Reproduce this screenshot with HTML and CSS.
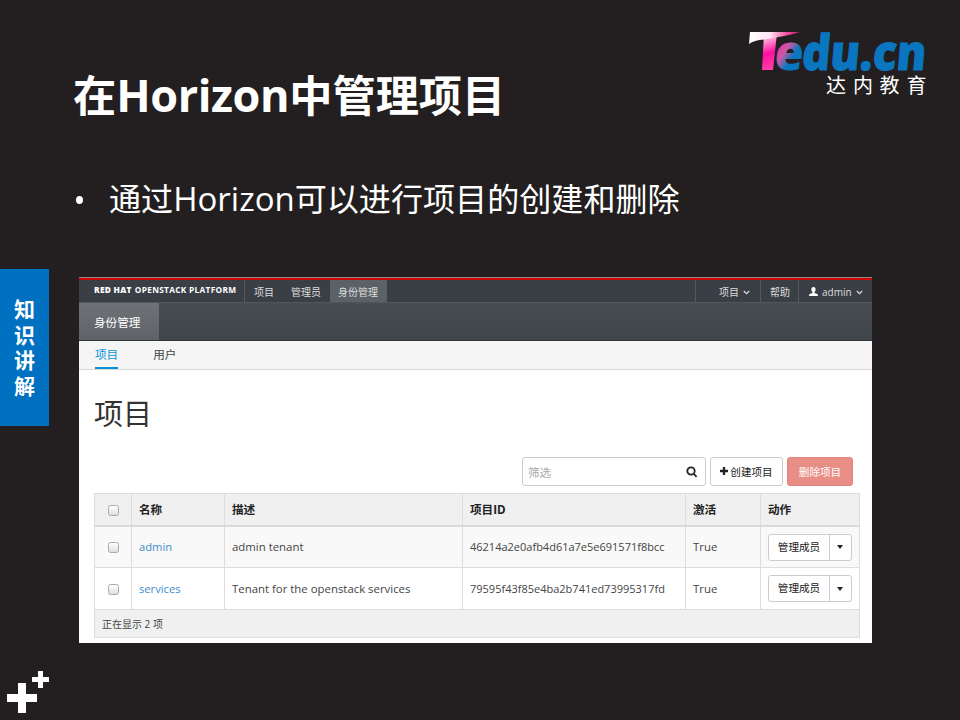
FILE: index.html
```html
<!DOCTYPE html>
<html lang="zh-CN">
<head>
<meta charset="utf-8">
<title>在Horizon中管理项目</title>
<link rel="stylesheet" href="styles.css">
</head>
<body>
<main class="slide">
  <header class="slide-head">
    <h1>在<span class="latin">Horizon</span>中管理项目</h1>
    <svg class="logo" width="190" height="76" viewBox="0 0 190 76">
      <defs>
        <linearGradient id="pink" gradientUnits="userSpaceOnUse" x1="14" y1="4" x2="26" y2="44">
          <stop offset="0" stop-color="#fff"/><stop offset=".2" stop-color="#ffe2f1"/><stop offset=".65" stop-color="#ff0fa0"/><stop offset="1" stop-color="#ff3ba6"/>
        </linearGradient>
        <linearGradient id="bar" gradientUnits="userSpaceOnUse" x1="10" y1="0" x2="60" y2="0">
          <stop offset="0" stop-color="#fff"/><stop offset=".4" stop-color="#ffe4f2"/><stop offset=".75" stop-color="#f04a9f"/><stop offset="1" stop-color="#c01878"/>
        </linearGradient>
        <linearGradient id="blend" gradientUnits="userSpaceOnUse" x1="37" y1="-22" x2="56" y2="-11">
          <stop offset="0" stop-color="#f3359e"/><stop offset=".35" stop-color="#c55aa5"/><stop offset=".8" stop-color="#0a76bf"/>
        </linearGradient>
      </defs>
      <path fill="url(#pink)" d="M24 8H37L33 45H22Z"/>
      <path fill="url(#bar)" d="M10 7H60Q50 10 36 12.500L24 14.500Q14 15 9 19Z"/>
      <g transform="translate(0 44.500) skewX(-5)">
        <text class="word" x="33.500" y="0" textLength="29" lengthAdjust="spacingAndGlyphs" fill="url(#blend)">e</text>
        <text class="word" x="61" y="0" textLength="124" lengthAdjust="spacingAndGlyphs" fill="#0a76bf" stroke="#0a76bf">du.cn</text>
      </g>
      <text class="logo-sub" y="67.500"><tspan x="86">达</tspan><tspan x="113">内</tspan><tspan x="139.500">教</tspan><tspan x="166.500">育</tspan></text>
    </svg>
  </header>
  <p class="point"><i class="dot"></i><span>通过<span class="latin">Horizon</span>可以进行项目的创建和删除</span></p>
  <div class="stage">
    <aside class="side"><span>知</span><span>识</span><span>讲</span><span>解</span></aside>
    <section class="window">
      <nav class="topbar">
        <div class="brand"><b>RED HAT</b><span>OPENSTACK PLATFORM</span></div>
        <a class="t1">项目</a><a class="t2">管理员</a><a class="t3">身份管理</a>
        <div class="grow"></div>
        <a class="r1">项目<svg class="chev" viewBox="0 0 7 5"><path d="M.8 1 3.500 3.700 6.200 1"/></svg></a>
        <a class="r2">帮助</a>
        <a class="r3"><svg class="user" viewBox="0 0 9 9"><path d="M4.500 0C6 0 6.700 1 6.600 2.400 6.500 3.700 6 4.600 5.500 5V6L8.300 7.100Q9 7.400 9 9H0Q0 7.400.7 7.100L3.500 6V5C3 4.600 2.500 3.700 2.400 2.400 2.300 1 3 0 4.500 0Z"/></svg>admin<svg class="chev" viewBox="0 0 7 5"><path d="M.8 1 3.500 3.700 6.200 1"/></svg></a>
      </nav>
      <div class="subbar"><span>身份管理</span></div>
      <div class="tabs"><a class="on">项目</a><a>用户</a></div>
      <div class="content">
        <h2>项目</h2>
        <div class="tools">
          <div class="search"><span>筛选</span><svg width="12" height="12" viewBox="0 0 12 12"><circle cx="5" cy="5" r="3.700"/><path d="M7.800 7.800 10.600 10.800"/></svg></div>
          <div class="btn create"><svg width="8" height="8" viewBox="0 0 8 8"><path d="M4 0V8M0 4H8"/></svg>创建项目</div>
          <div class="btn danger">删除项目</div>
        </div>
        <div class="table">
          <div class="row head"><div><i class="box"></i></div><div>名称</div><div>描述</div><div>项目ID</div><div>激活</div><div>动作</div></div>
          <div class="row odd"><div><i class="box"></i></div><div class="link">admin</div><div>admin tenant</div><div class="uid">46214a2e0afb4d61a7e5e691571f8bcc</div><div>True</div><div><span class="split"><span>管理成员</span><i class="caret"></i></span></div></div>
          <div class="row"><div><i class="box"></i></div><div class="link">services</div><div>Tenant for the openstack services</div><div class="uid">79595f43f85e4ba2b741ed73995317fd</div><div>True</div><div><span class="split"><span>管理成员</span><i class="caret"></i></span></div></div>
          <div class="foot">正在显示 2 项</div>
        </div>
      </div>
    </section>
  </div>
  <svg class="plus" width="60" height="60" viewBox="0 0 60 60"><path fill="#fff" d="M18 23h8v11h11v8H26v11h-8V42H7v-8h11zM38 11h5v6h6v5h-6v6h-5v-6h-6v-5h6z"/></svg>
</main>
</body>
</html>
```
FILE: styles.css
```css
* { box-sizing: border-box; }
body { margin: 0; }
.slide {
  width: 960px; height: 720px; overflow: hidden; background: #231f20; color: #fff;
  font-family: "Open Sans", "Noto Sans CJK SC", sans-serif;
  display: flex; flex-direction: column;
}
.slide-head { display: flex; justify-content: space-between; height: 140px; padding: 25px 30px 0 73px; flex: none; }
h1 { margin: 41px 0 0; font-size: 43.2px; line-height: 58px; font-weight: 700; white-space: nowrap; }
h1 .latin { font-size: 45px; letter-spacing: -.4px; }
.logo { flex: none; overflow: visible; }
.word { font: 800 49px "Open Sans", sans-serif; }
.logo-sub { font: 400 20px "Noto Sans CJK SC", sans-serif; fill: #fff; }
.point { display: flex; align-items: center; margin: 34px 0 0 76px; height: 50px; font-size: 32.1px; line-height: 50px; white-space: nowrap; flex: none; }
.point .latin { font-size: 33px; }
.dot { width: 7px; height: 8px; border-radius: 50%; background: #fff; margin-right: 26px; margin-top: 1px; }
.stage { display: flex; align-items: flex-start; margin-top: 45px; gap: 30px; flex: none; }
.side {
  width: 49px; height: 157px; background: #0070c0; display: flex; flex-direction: column;
  align-items: center; justify-content: center; font-size: 21px; line-height: 25.5px; font-weight: 700; padding-top: 1px;
}
.window { width: 793px; height: 366px; margin-top: 8px; background: #fff; border-top: 1px solid #8b8788; font-size: 11.4px; color: #444; }
.topbar { height: 25px; border-top: 2px solid #d00000; border-bottom: 1px solid #4f565a; background: #393f45; display: flex; color: #ddd; font-size: 10px; line-height: 24px; }
.brand { width: 166px; padding-left: 15px; border-right: 1px solid #555a60; font: 700 8.3px/20px "Open Sans", sans-serif; color: #fff; white-space: nowrap; letter-spacing: .3px; }
.brand b { font-weight: 800; margin-right: 3px; }
.t1 { padding-left: 9px; width: 46px; }
.t2 { width: 39px; }
.t3 { width: 57px; padding-left: 8px; background: #5a6266; }
.grow { flex: 1; }
.r1, .r2, .r3 { border-left: 1px solid #53595e; }
.r1 { width: 65px; padding-left: 23px; }
.r2 { width: 38px; padding-left: 9px; }
.r3 { width: 74px; padding-left: 10px; }
.chev { width: 7px; height: 5px; margin-left: 4px; vertical-align: 1px; fill: none; stroke: #ddd; stroke-width: 1.2; }
.user { width: 9px; height: 9px; margin-right: 4px; fill: #fff; vertical-align: 0; }
.subbar { height: 38px; background: linear-gradient(#474d50, #3e4549); border-bottom: 1px solid #34383b; }
.subbar span { display: block; width: 80px; height: 37px; padding-left: 15px; line-height: 39px; font-size: 11.6px; color: #fff; background: linear-gradient(#6e7176, #5f6267); }
.tabs { height: 29px; background: #f5f5f5; border-bottom: 1px solid #d9d9d9; padding-left: 16px; display: flex; gap: 35px; font-size: 11.6px; line-height: 28px; }
.tabs a { height: 28px; }
.tabs .on { color: #0a96d6; border-bottom: 2px solid #0a8fd8; }
.content { padding: 0 12px 0 15px; }
h2 { margin: 23px 0 0; height: 42px; font-size: 29px; line-height: 42px; font-weight: 400; color: #333; }
.tools { display: flex; justify-content: flex-end; margin-top: 22px; padding-right: 7px; height: 29px; gap: 4px; }
.search { width: 184px; height: 29px; border: 1px solid #ccc; border-radius: 3px; display: flex; align-items: center; justify-content: space-between; padding: 0 7px 0 5px; color: #aaa; font-size: 11.6px; }
.search svg { fill: none; stroke: #222; stroke-width: 1.8; margin-top: 1px; }
.btn { height: 29px; border: 1px solid #ccc; border-radius: 3px; font-size: 10.6px; display: flex; align-items: center; justify-content: center; color: #222; padding-bottom: 1px; }
.create { width: 73px; gap: 2px; }
.create svg { stroke: #222; stroke-width: 2.3; }
.danger { width: 66px; background: #e88e87; border-color: #e3837c; color: #fff; }
.table { width: 766px; margin-top: 7px; border: 1px solid #ddd; height: 145px; line-height: 16px; }
.row { display: grid; grid-template-columns: 37px 93px 238px 223px 75px 98px; height: 42px; border-bottom: 1px solid #ddd; }
.row > div { border-right: 1px solid #ddd; padding-left: 7px; display: flex; align-items: center; white-space: nowrap; }
.row > div:first-child { padding: 0 0 0 13px; }
.row > div:last-child { border-right: 0; }
.head { height: 33px; background: #f0f0f0; border-bottom: 2px solid #d9d9d9; font-weight: 700; color: #222; font-size: 11.6px; }
.odd { height: 41px; background: #f9f9f9; }
.row .link { color: #428bca; font-size: 11.2px; }
.row .uid { font-size: 11px; }
.box { width: 11px; height: 11px; border: 1px solid #aaa; border-radius: 2.5px; background: linear-gradient(#fff, #dedede); margin-top: 1px; }
.split { width: 84px; height: 27px; border: 1px solid #ccc; border-radius: 3px; background: #fff; display: flex; align-items: center; font-size: 10.6px; color: #222; }
.split span { width: 61px; height: 25px; line-height: 25px; text-align: center; border-right: 1px solid #ccc; }
.caret { margin-left: 7px; border: 3.5px solid transparent; border-top: 4px solid #222; border-bottom: 0; }
.foot { height: 27px; background: #f0f0f0; padding-left: 7px; line-height: 28px; font-size: 10px; color: #444; }
.plus { margin-top: 17px; flex: none; }
```
